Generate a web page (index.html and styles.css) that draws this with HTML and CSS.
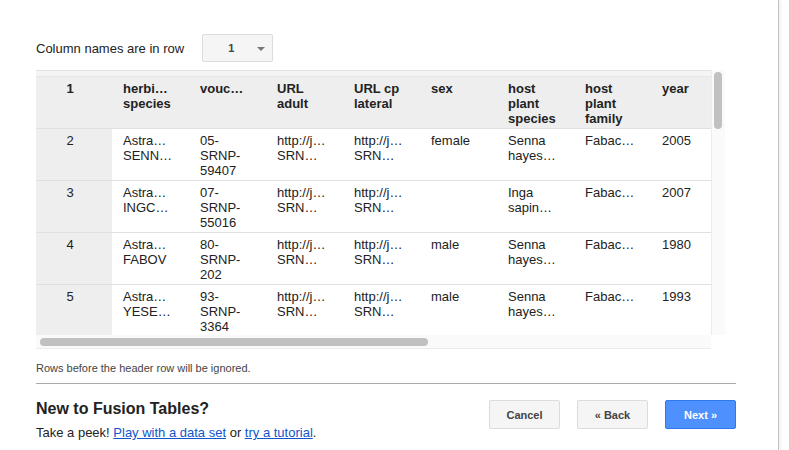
FILE: index.html
```html
<!DOCTYPE html>
<html>
<head>
<meta charset="utf-8">
<link rel="stylesheet" href="styles.css">
</head>
<body>
<div class="dialog">
  <div class="page">
    <div class="row-select">
      <span class="label">Column names are in row</span>
      <div class="dropdown"><span class="dd-val">1</span><span class="dd-arrow"></span></div>
    </div>

    <div class="grid-box">
      <div class="viewport">
        <div class="strip"></div>
        <table class="data">
          <colgroup><col class="c-num"><col><col><col><col><col><col><col><col></colgroup>
          <thead>
            <tr>
              <th class="num">1</th>
              <th>herbi…<br>species</th>
              <th>vouc…</th>
              <th>URL<br>adult</th>
              <th>URL cp<br>lateral</th>
              <th>sex</th>
              <th>host<br>plant<br>species</th>
              <th>host<br>plant<br>family</th>
              <th>year</th>
            </tr>
          </thead>
          <tbody>
            <tr>
              <td class="num">2</td>
              <td>Astra…<br>SENN…</td>
              <td>05-<br>SRNP-<br>59407</td>
              <td>http://j…<br>SRN…</td>
              <td>http://j…<br>SRN…</td>
              <td>female</td>
              <td>Senna<br>hayes…</td>
              <td>Fabac…</td>
              <td>2005</td>
            </tr>
            <tr>
              <td class="num">3</td>
              <td>Astra…<br>INGC…</td>
              <td>07-<br>SRNP-<br>55016</td>
              <td>http://j…<br>SRN…</td>
              <td>http://j…<br>SRN…</td>
              <td></td>
              <td>Inga<br>sapin…</td>
              <td>Fabac…</td>
              <td>2007</td>
            </tr>
            <tr>
              <td class="num">4</td>
              <td>Astra…<br>FABOV</td>
              <td>80-<br>SRNP-<br>202</td>
              <td>http://j…<br>SRN…</td>
              <td>http://j…<br>SRN…</td>
              <td>male</td>
              <td>Senna<br>hayes…</td>
              <td>Fabac…</td>
              <td>1980</td>
            </tr>
            <tr>
              <td class="num">5</td>
              <td>Astra…<br>YESE…</td>
              <td>93-<br>SRNP-<br>3364</td>
              <td>http://j…<br>SRN…</td>
              <td>http://j…<br>SRN…</td>
              <td>male</td>
              <td>Senna<br>hayes…</td>
              <td>Fabac…</td>
              <td>1993</td>
            </tr>
          </tbody>
        </table>
      </div>
      <div class="vscroll"><div class="vthumb"></div></div>
      <div class="hscroll"><div class="hthumb"></div></div>
    </div>

    <p class="note">Rows before the header row will be ignored.</p>
    <div class="sep"></div>

    <div class="footer">
      <div class="intro">
        <h2>New to Fusion Tables?</h2>
        <p>Take a peek! <a href="#">Play with a data set</a> or <a href="#">try a tutorial</a>.</p>
      </div>
      <div class="buttons">
        <button class="btn">Cancel</button>
        <button class="btn">« Back</button>
        <button class="btn primary">Next »</button>
      </div>
    </div>
  </div>
</div>
</body>
</html>
```

FILE: styles.css
```css
* { box-sizing: border-box; }
html, body { margin: 0; padding: 0; background: #fff; }
body {
  font-family: "Liberation Sans", Arial, sans-serif;
  font-size: 13px;
  color: #222;
  overflow: hidden;
}
.dialog {
  width: 779px;
  height: 450px;
  border-right: 1px solid #c4c4c4;
  box-shadow: 2px 0 3px rgba(0,0,0,0.06);
}
.page {
  width: 736px;
  padding-left: 36px;
  padding-top: 34px;
}
.row-select {
  display: flex;
  align-items: center;
  height: 28px;
}
.label { font-size: 13px; color: #222; }
.dropdown {
  margin-left: 18px;
  width: 71px;
  height: 28px;
  background: #f5f5f5;
  border: 1px solid #dcdcdc;
  border-radius: 2px;
  display: flex;
  align-items: center;
  position: relative;
}
.dd-val {
  font-size: 11px;
  font-weight: bold;
  color: #444;
  margin-left: 25px;
}
.dd-arrow {
  position: absolute;
  left: 54px;
  top: 12px;
  width: 0;
  height: 0;
  border-left: 4px solid transparent;
  border-right: 4px solid transparent;
  border-top: 4px solid #777;
}
.grid-box {
  margin-top: 8px;
  width: 689px;
  display: grid;
  grid-template-columns: 675px 14px;
  grid-template-rows: 265px 14px;
}
.viewport {
  overflow: hidden;
  background: #fff;
  border-top: 1px solid #e2e2e2;
}
.strip {
  height: 6px;
  background: #f4f4f4;
  border-bottom: 1px solid #e6e6e6;
}
table.data {
  border-collapse: collapse;
  table-layout: fixed;
  width: 692px;
}
table.data col { width: 77px; }
table.data col.c-num { width: 76px; }
table.data th, table.data td {
  text-align: left;
  vertical-align: top;
  padding: 4px 4px 2px 11px;
  line-height: 15px;
  font-size: 13px;
  height: 51px;
  border-bottom: 1px solid #e0e0e0;
  white-space: nowrap;
  overflow: hidden;
}
table.data th {
  background: #eeeeee;
  font-weight: bold;
  color: #222;
}
table.data td { color: #222; }
table.data .num {
  background: #eeeeee;
  text-align: center;
  padding-left: 0;
  padding-right: 8px;
}
.vscroll {
  background: #fafafa;
  border-left: 1px solid #ececec;
  padding: 2px 0 0 2px;
}
.vthumb {
  width: 8px;
  height: 57px;
  background: #c1c1c1;
  border-radius: 4px;
}
.hscroll {
  background: #fafafa;
  border-bottom: 1px solid #ececec;
  padding: 3px 0 0 4px;
}
.hthumb {
  width: 388px;
  height: 8px;
  background: #c1c1c1;
  border-radius: 4px;
}
.note {
  margin: 13px 0 0;
  font-size: 11px;
  line-height: 13px;
  color: #444;
}
.sep {
  margin-top: 8px;
  height: 1px;
  background: #aaaaaa;
  width: 700px;
}
.footer {
  display: flex;
  justify-content: space-between;
  width: 700px;
}
.intro h2 {
  margin: 15px 0 0;
  font-size: 16px;
  line-height: 20px;
  font-weight: bold;
  color: #222;
}
.intro p {
  margin: 6px 0 0;
  font-size: 13px;
  line-height: 16px;
  color: #222;
}
.intro a { color: #1155cc; text-decoration: underline; }
.buttons {
  display: flex;
  gap: 17px;
  margin-top: 16px;
  align-self: flex-start;
}
.btn {
  width: 71px;
  height: 29px;
  font-family: "Liberation Sans", Arial, sans-serif;
  font-size: 11px;
  font-weight: bold;
  color: #444;
  background: #f5f5f5;
  border: 1px solid #dcdcdc;
  border-radius: 2px;
  padding: 0;
}
.btn.primary {
  background: #4d90fe;
  border-color: #3079ed;
  color: #fff;
}
```
